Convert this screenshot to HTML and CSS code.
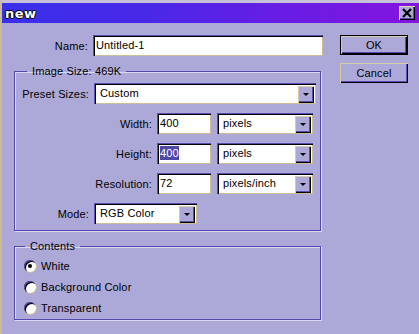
FILE: index.html
```html
<!DOCTYPE html>
<html lang="en">
<head>
    <meta charset="UTF-8">
    <title>New</title>
    <link rel="stylesheet" href="styles.css">
</head>
<body>
    <div class="window">
        <div class="titlebar">
            <span class="title">new</span>
            <span class="close">
                <svg width="10" height="10" viewBox="0 0 10 10"><path d="M1 1L9 9M9 1L1 9" stroke="#000" stroke-width="2.2"/></svg>
            </span>
        </div>

        <div class="body">
            <div class="main">
                <div class="row name-row">
                    <label class="lbl lbl-wide">Name:</label>
                    <div class="field field-name">Untitled-1</div>
                </div>

                <fieldset class="group size-group">
                    <legend>Image Size: 469K</legend>
                    <div class="row">
                        <label class="lbl lbl-short">Preset Sizes:</label>
                        <div class="select select-preset"><span>Custom</span><i class="arrow"></i></div>
                    </div>
                    <div class="row">
                        <label class="lbl lbl-long">Width:</label>
                        <div class="field field-num">400</div>
                        <div class="select select-unit"><span>pixels</span><i class="arrow"></i></div>
                    </div>
                    <div class="row">
                        <label class="lbl lbl-long">Height:</label>
                        <div class="field field-num"><span class="sel">400</span></div>
                        <div class="select select-unit"><span>pixels</span><i class="arrow"></i></div>
                    </div>
                    <div class="row">
                        <label class="lbl lbl-long">Resolution:</label>
                        <div class="field field-num">72</div>
                        <div class="select select-unit"><span>pixels/inch</span><i class="arrow"></i></div>
                    </div>
                    <div class="row">
                        <label class="lbl lbl-short">Mode:</label>
                        <div class="select select-mode"><span>RGB Color</span><i class="arrow"></i></div>
                    </div>
                </fieldset>

                <fieldset class="group contents-group">
                    <legend>Contents</legend>
                    <label class="radio-row"><span class="radio checked"></span>White</label>
                    <label class="radio-row"><span class="radio"></span>Background Color</label>
                    <label class="radio-row"><span class="radio"></span>Transparent</label>
                </fieldset>
            </div>

            <div class="side">
                <button class="btn btn-default">OK</button>
                <button class="btn">Cancel</button>
            </div>
        </div>
    </div>
</body>
</html>
```

FILE: styles.css
```css
* {
    box-sizing: border-box;
}

body {
    margin: 0;
    padding: 0;
    width: 419px;
    height: 334px;
    overflow: hidden;
    background-color: #aca8d8;
    font-family: "Liberation Sans", Arial, sans-serif;
    font-size: 11px;
    letter-spacing: 0.15px;
    color: #000;
}

.window {
    height: 334px;
    border-left: 2px solid #cdbb92;
    border-top: 3px solid #c6c0d8;
}

/* title bar */
.titlebar {
    height: 20px;
    display: flex;
    align-items: center;
    justify-content: space-between;
    padding: 0 4px 0 3px;
    background: linear-gradient(90deg, #3830ea 0%, #4a28e8 35%, #6a1ce4 70%, #8414de 100%);
}

.title {
    font-family: "DejaVu Sans", sans-serif;
    font-weight: bold;
    font-size: 13px;
    color: #fff;
    letter-spacing: 0.5px;
    text-shadow: 1px 0 0 #000, -1px 0 0 #000, 0 1px 0 #000, 0 -1px 0 #000;
}

.close {
    width: 16px;
    height: 14px;
    display: flex;
    align-items: center;
    justify-content: center;
    background-color: #aca8d8;
    box-shadow: inset 1px 1px 0 #e0d4b4, inset -1px -1px 0 #000, inset -2px -2px 0 #5a4cb0;
}

/* layout */
.body {
    display: flex;
    padding-top: 12px;
}

.main {
    width: 321px;
}

.side {
    margin-left: 17px;
    display: flex;
    flex-direction: column;
    gap: 8px;
}

.row {
    display: flex;
    align-items: center;
    gap: 5px;
    height: 21px;
}

.lbl {
    text-align: right;
}

.lbl-wide { width: 86px; }
.lbl-short { width: 73px; }
.lbl-long { width: 136px; }

/* sunken text boxes */
.field, .select {
    height: 21px;
    background-color: #fff;
    box-shadow: inset 1px 1px 0 #5a4cb0, inset 2px 2px 0 #000, inset -1px -1px 0 #cdbb92;
    line-height: 21px;
    padding-left: 3px;
    white-space: nowrap;
}

.field-name { width: 230px; }
.field-num { width: 54px; }

.sel {
    background-color: #5048a8;
    color: #fff;
    padding: 1px 0;
}

.select {
    display: flex;
    align-items: center;
    justify-content: space-between;
    padding-left: 6px;
}

.select-preset { width: 222px; }
.select-unit { width: 96px; margin-left: 1px; }
.select-mode { width: 103px; }

.arrow {
    width: 16px;
    height: 17px;
    margin-right: 2px;
    margin-top: 2px;
    display: flex;
    align-items: center;
    justify-content: center;
    background-color: #aca8d8;
    box-shadow: inset 1px 1px 0 #d8cca8, inset -1px -1px 0 #000, inset -2px -2px 0 #5a4cb0;
}

.arrow::after {
    content: "";
    border-left: 3px solid transparent;
    border-right: 3px solid transparent;
    border-top: 3px solid #000;
}

/* group boxes */
.group {
    margin: 0 0 0 12px;
    width: 307px;
    padding: 0 0 0 1px;
    border: 1px solid #5448ac;
    box-shadow: 1px 1px 0 #dcd8f4, inset 1px 1px 0 #dcd8f4;
}

.group legend {
    margin-left: 11px;
    padding: 0 5px;
    line-height: 13px;
}

.size-group {
    margin-top: 9px;
    padding-top: 5px;
    padding-bottom: 6px;
    display: flex;
    flex-direction: column;
    gap: 9px;
}

.contents-group {
    margin-top: 9px;
    padding: 3px 0 1px 0;
}

.contents-group legend {
    margin-left: 10px;
}

.radio-row {
    display: flex;
    align-items: center;
    gap: 5px;
    height: 20px;
    padding-left: 9px;
}

.radio-row + .radio-row {
    margin-top: 1px;
}

.radio {
    width: 12px;
    height: 12px;
    border-radius: 50%;
    background-color: #fff;
    display: flex;
    align-items: center;
    justify-content: center;
    box-shadow: inset 1px 1px 0 #5a4cb0, inset 2px 2px 0 #000, 0.5px 0.5px 0 0.5px #cdbb92;
}

.radio.checked::after {
    content: "";
    width: 4px;
    height: 4px;
    border-radius: 50%;
    background-color: #000;
}

/* buttons */
.btn {
    width: 68px;
    height: 20px;
    padding: 0;
    border: none;
    background-color: #aca8d8;
    font-family: "Liberation Sans", Arial, sans-serif;
    font-size: 11px;
    letter-spacing: 0.15px;
    color: #000;
    box-shadow: inset 1px 1px 0 #d8cca8, inset -1px -1px 0 #000, inset -2px -2px 0 #5a4cb0;
}

.btn-default {
    border: 1px solid #000;
}
```
